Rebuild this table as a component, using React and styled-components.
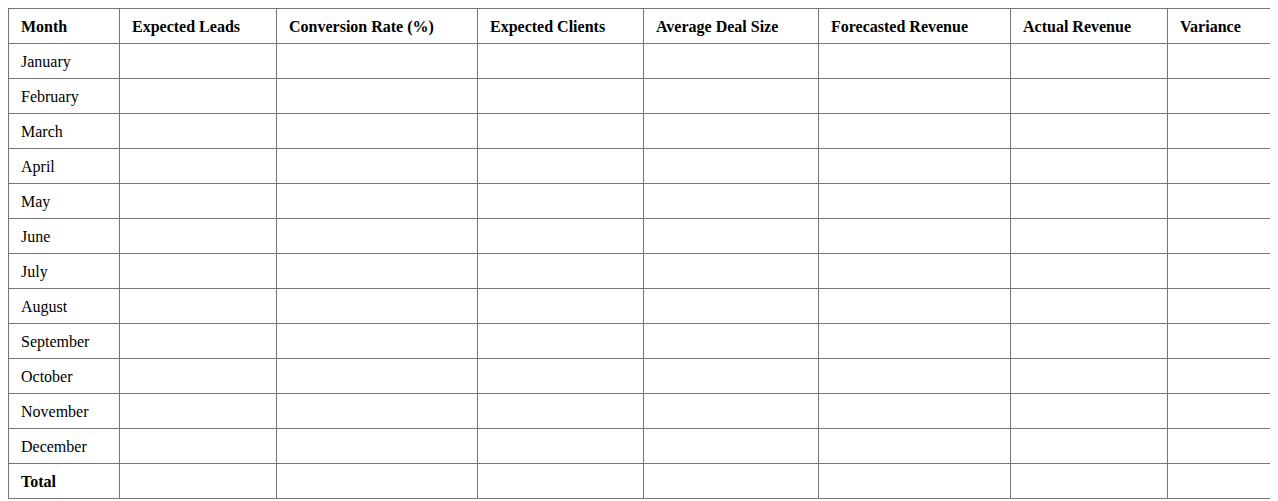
import React from "react";
import styled, { createGlobalStyle } from "styled-components";

const Global = createGlobalStyle`
  body { margin: 8px; background: #fff; font-family: "Liberation Serif", "Times New Roman", serif; color: #000; }
`;

const Table = styled.table`
  width: 1262px;
  border-collapse: collapse;
  table-layout: fixed;
  font-size: 16px;
`;

const Th = styled.th`
  border: 1px solid #777;
  padding: 9px 12px 7px;
  line-height: 18px;
  height: 18px;
  text-align: left;
  font-weight: bold;
  white-space: nowrap;
`;

const Td = styled.td`
  border: 1px solid #777;
  padding: 9px 12px 7px;
  line-height: 18px;
  height: 18px;
  text-align: left;
  font-weight: ${(p) => (p.$bold ? "bold" : "normal")};
`;

const widths = [111, 157, 201, 166, 175, 192, 157, 103];
const headers = [
  "Month",
  "Expected Leads",
  "Conversion Rate (%)",
  "Expected Clients",
  "Average Deal Size",
  "Forecasted Revenue",
  "Actual Revenue",
  "Variance",
];
const months = [
  "January", "February", "March", "April", "May", "June",
  "July", "August", "September", "October", "November", "December",
];

export default function App() {
  return (
    <>
      <Global />
      <Table>
        <colgroup>
          {widths.map((w, i) => (
            <col key={i} style={{ width: w }} />
          ))}
        </colgroup>
        <thead>
          <tr>
            {headers.map((h) => (
              <Th key={h}>{h}</Th>
            ))}
          </tr>
        </thead>
        <tbody>
          {months.map((m) => (
            <tr key={m}>
              <Td>{m}</Td>
              {headers.slice(1).map((h) => (
                <Td key={h} />
              ))}
            </tr>
          ))}
          <tr>
            <Td $bold>Total</Td>
            {headers.slice(1).map((h) => (
              <Td key={h} />
            ))}
          </tr>
        </tbody>
      </Table>
    </>
  );
}
